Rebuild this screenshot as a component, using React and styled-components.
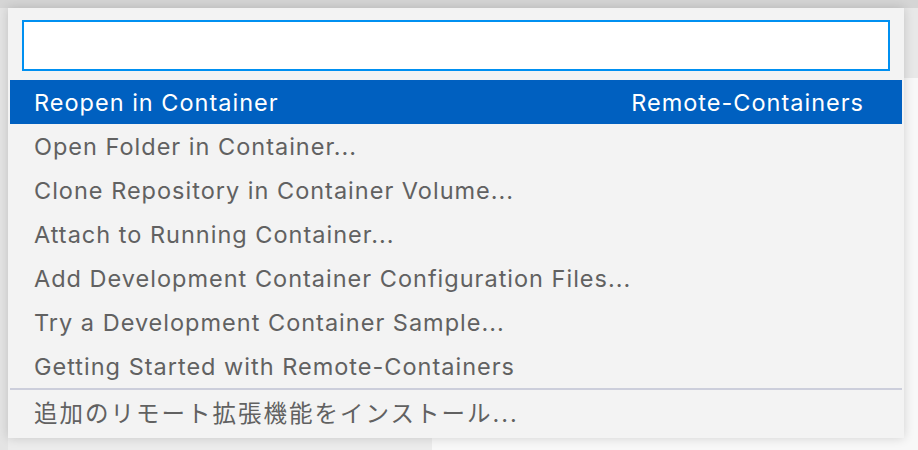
import React from "react";
import styled, { createGlobalStyle } from "styled-components";

const GlobalStyle = createGlobalStyle`
    html, body {
        margin: 0;
        padding: 0;
        width: 918px;
        height: 450px;
        overflow: hidden;
        background: #f8f8f8;
    }
    #root {
        width: 918px;
        height: 450px;
    }
`;

const commands = [
    { label: "Reopen in Container", detail: "Remote-Containers", selected: true },
    { label: "Open Folder in Container..." },
    { label: "Clone Repository in Container Volume..." },
    { label: "Attach to Running Container..." },
    { label: "Add Development Container Configuration Files..." },
    { label: "Try a Development Container Sample..." },
    { label: "Getting Started with Remote-Containers" },
];

export default function App() {
    return (
        <>
            <GlobalStyle />
            <Window>
                <TitleBar />
                <Workbench>
                    <SideBar />
                    <Editor>
                        <TabStrip />
                    </Editor>
                </Workbench>

                <QuickInput>
                    <InputBox type="text" />
                    <List>
                        {commands.map((c) => (
                            <Row key={c.label} selected={c.selected}>
                                <Label>{c.label}</Label>
                                {c.detail && <Label>{c.detail}</Label>}
                            </Row>
                        ))}
                        <Separator />
                        <Row>
                            <Label wide>追加のリモート拡張機能をインストール...</Label>
                        </Row>
                    </List>
                </QuickInput>
            </Window>
        </>
    );
}

const Window = styled.div`
    position: relative;
    width: 918px;
    height: 450px;
    display: flex;
    flex-direction: column;
    font-family: "Inter", "Noto Sans CJK JP", sans-serif;
`;

const TitleBar = styled.div`
    height: 8px;
    background: #d5d5d5;
`;

const Workbench = styled.div`
    flex: 1;
    display: flex;
`;

const SideBar = styled.div`
    width: 432px;
    background: linear-gradient(to right, #e4e4e4 0, #e4e4e4 8px, #ececec 8px);
`;

const Editor = styled.div`
    flex: 1;
    background: #f8f8f8;
`;

const TabStrip = styled.div`
    height: 70px;
    background: #e8e8e8;
`;

const QuickInput = styled.div`
    position: absolute;
    top: 8px;
    left: 8px;
    width: 896px;
    height: 430px;
    box-sizing: border-box;
    background: #f3f3f3;
    box-shadow: 0 0 10px rgba(0, 0, 0, 0.16);
    padding: 12px 2px 4px;
    display: flex;
    flex-direction: column;
`;

const InputBox = styled.input`
    box-sizing: border-box;
    margin: 0 12px 9px;
    width: 868px;
    height: 51px;
    border: 2px solid #0090f1;
    background: #ffffff;
    outline: none;
    font-family: inherit;
    font-size: 22px;
`;

const List = styled.div`
    display: flex;
    flex-direction: column;
`;

const Row = styled.div`
    height: 44px;
    box-sizing: border-box;
    padding: 0 38px 0 24px;
    display: flex;
    align-items: center;
    justify-content: space-between;
    background: ${(p) => (p.selected ? "#0060c0" : "transparent")};
    color: ${(p) => (p.selected ? "#ffffff" : "#616161")};
    font-size: 23.5px;
`;

const Label = styled.span`
    white-space: nowrap;
    letter-spacing: ${(p) => (p.wide ? "2px" : "1px")};
`;

const Separator = styled.div`
    height: 2px;
    background: #cccedb;
`;
